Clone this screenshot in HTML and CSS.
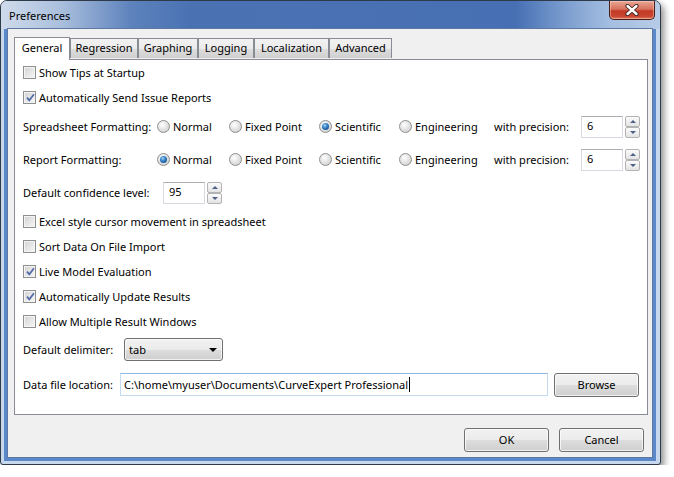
FILE: index.html
```html
<!DOCTYPE html>
<html lang="en">
<head>
    <meta charset="UTF-8">
    <title>Preferences</title>
    <link rel="stylesheet" href="styles.css">
</head>
<body>

    <div class="window">
        <!-- Barra de titulo -->
        <div class="titlebar">
            <span class="title">Preferences</span>
            <div class="close-btn">
                <svg width="16" height="12" viewBox="0 0 16 12">
                    <path d="M3.5 2 L12.5 10 M12.5 2 L3.5 10" stroke="#3b2420" stroke-width="4.2" stroke-linecap="round"/>
                    <path d="M3.5 2 L12.5 10 M12.5 2 L3.5 10" stroke="#ffffff" stroke-width="2.4" stroke-linecap="round"/>
                </svg>
            </div>
        </div>

        <div class="client">
            <!-- Abas -->
            <div class="tabs">
                <div class="tab active w-general">General</div>
                <div class="tab w-regression">Regression</div>
                <div class="tab w-graphing">Graphing</div>
                <div class="tab w-logging">Logging</div>
                <div class="tab w-localization">Localization</div>
                <div class="tab w-advanced">Advanced</div>
            </div>

            <div class="panel">
                <div class="check-row">
                    <span class="check"></span>
                    <span>Show Tips at Startup</span>
                </div>
                <div class="check-row">
                    <span class="check checked"></span>
                    <span>Automatically Send Issue Reports</span>
                </div>

                <!-- Formatacao -->
                <div class="format-row first">
                    <span>Spreadsheet Formatting:</span>
                    <span class="radio-opt"><span class="radio"></span>Normal</span>
                    <span class="radio-opt"><span class="radio"></span>Fixed Point</span>
                    <span class="radio-opt"><span class="radio selected"></span>Scientific</span>
                    <span class="radio-opt"><span class="radio"></span>Engineering</span>
                    <span>with precision:</span>
                    <div class="spinner">
                        <div class="textbox small">6</div>
                        <div class="spin-btns">
                            <span class="spin-btn"><span class="arrow-up"></span></span>
                            <span class="spin-btn"><span class="arrow-down"></span></span>
                        </div>
                    </div>
                </div>
                <div class="format-row second">
                    <span>Report Formatting:</span>
                    <span class="radio-opt"><span class="radio selected"></span>Normal</span>
                    <span class="radio-opt"><span class="radio"></span>Fixed Point</span>
                    <span class="radio-opt"><span class="radio"></span>Scientific</span>
                    <span class="radio-opt"><span class="radio"></span>Engineering</span>
                    <span>with precision:</span>
                    <div class="spinner">
                        <div class="textbox small">6</div>
                        <div class="spin-btns">
                            <span class="spin-btn"><span class="arrow-up"></span></span>
                            <span class="spin-btn"><span class="arrow-down"></span></span>
                        </div>
                    </div>
                </div>

                <div class="field-row confidence">
                    <span class="lbl-confidence">Default confidence level:</span>
                    <div class="spinner">
                        <div class="textbox small">95</div>
                        <div class="spin-btns">
                            <span class="spin-btn"><span class="arrow-up"></span></span>
                            <span class="spin-btn"><span class="arrow-down"></span></span>
                        </div>
                    </div>
                </div>

                <div class="check-row">
                    <span class="check"></span>
                    <span>Excel style cursor movement in spreadsheet</span>
                </div>
                <div class="check-row">
                    <span class="check"></span>
                    <span>Sort Data On File Import</span>
                </div>
                <div class="check-row">
                    <span class="check checked"></span>
                    <span>Live Model Evaluation</span>
                </div>
                <div class="check-row">
                    <span class="check checked"></span>
                    <span>Automatically Update Results</span>
                </div>
                <div class="check-row">
                    <span class="check"></span>
                    <span>Allow Multiple Result Windows</span>
                </div>

                <div class="field-row delimiter">
                    <span class="lbl-delimiter">Default delimiter:</span>
                    <div class="combo">
                        <span>tab</span>
                        <span class="combo-arrow"></span>
                    </div>
                </div>

                <div class="field-row data-file">
                    <span class="lbl-data">Data file location:</span>
                    <div class="textbox path focused">C:\home\myuser\Documents\CurveExpert Professional<span class="caret"></span></div>
                    <div class="button">Browse</div>
                </div>
            </div>

            <!-- Botoes -->
            <div class="dialog-buttons">
                <div class="button">OK</div>
                <div class="button">Cancel</div>
            </div>
        </div>
    </div>

</body>
</html>
```

FILE: styles.css
```css
body {
    margin: 0;
    background-color: #ffffff;
    font-family: "Noto Sans", "Open Sans", sans-serif;
    font-size: 11px;
    color: #000000;
}

/* Janela */
.window {
    width: 659px;
    height: 463px;
    border: 1px solid #2f3a48;
    border-radius: 7px 7px 3px 3px;
    background-color: #c7d8ed;
    box-shadow: 3px 4px 7px rgba(0, 0, 0, 0.45);
    display: flex;
    flex-direction: column;
    overflow: hidden;
}

.titlebar {
    height: 28px;
    display: flex;
    justify-content: space-between;
    align-items: flex-start;
    padding: 0 5px 0 8px;
    background: linear-gradient(to right, #cfdbeb 0px, #aabfdd 60px, #5d82bc 130px, #4a72b3 190px, #4770b4 515px, #7c9ecf 565px, #a5bfe1 610px, #b6cbe6 659px);
    flex-shrink: 0;
}

.title {
    line-height: 28px;
    margin-top: 1px;
}

.close-btn {
    width: 44px;
    height: 18px;
    border: 1px solid #4b1c14;
    border-top: none;
    border-radius: 0 0 5px 5px;
    background: linear-gradient(#e9a796 0%, #d8715d 45%, #c23b27 55%, #c8452f 85%, #e07a60 100%);
    box-shadow: inset 0 0 0 1px rgba(255, 220, 210, 0.45);
    display: flex;
    align-items: center;
    justify-content: center;
}

.client {
    flex: 1;
    margin: 0 8px 7px 7px;
    padding: 8px 4px 5px 6px;
    background-color: #f0f0f0;
    box-shadow: 0 0 0 1px #5d79a3, -4px 0 0 0 #5a88c8, 4px 0 0 0 #5a88c8, 0 4px 0 0 #5a88c8, -4px 4px 0 0 #5a88c8, 4px 4px 0 0 #5a88c8;
    display: flex;
    flex-direction: column;
}

/* Abas */
.tabs {
    display: flex;
    height: 22px;
    align-items: flex-end;
    position: relative;
    z-index: 1;
}

.tab {
    height: 20px;
    box-sizing: border-box;
    border: 1px solid #898c95;
    border-bottom: none;
    background: linear-gradient(#f2f2f2 0%, #ebebeb 50%, #dddddd 51%, #cfcfcf 100%);
    text-align: center;
    line-height: 18px;
    margin-bottom: 1px;
}

.tab.active {
    height: 23px;
    background: #ffffff;
    margin-bottom: -1px;
    line-height: 20px;
}

.w-general { width: 56px; }
.w-regression { width: 68px; }
.w-graphing { width: 60px; }
.w-logging { width: 56px; }
.w-localization { width: 75px; }
.w-advanced { width: 63px; }

.panel {
    height: 354px;
    border: 1px solid #898c95;
    background-color: #ffffff;
    padding: 0 8px;
}

/* Caixas de selecao */
.check-row {
    height: 25px;
    display: flex;
    align-items: center;
    gap: 3px;
}

.check {
    width: 11px;
    height: 11px;
    border: 1px solid #8e8f8f;
    background: linear-gradient(135deg, #d2d2d2, #f8f8f8);
    box-shadow: inset 0 0 0 1px #f4f4f4;
    position: relative;
}

.check.checked::after {
    content: "";
    position: absolute;
    left: 2px;
    top: 1px;
    width: 9px;
    height: 9px;
    background: url("data:image/svg+xml,%3Csvg xmlns='http://www.w3.org/2000/svg' width='9' height='9' viewBox='0 0 9 9'%3E%3Cpath d='M1 4.6 L3.3 7.3 L8 1.2' fill='none' stroke='%23506aa8' stroke-width='1.7'/%3E%3C/svg%3E") no-repeat;
}

/* Formatacao */
.format-row {
    display: grid;
    grid-template-columns: 134px 72px 90px 80px 95px 87px auto;
    align-items: center;
}

.format-row.first { height: 33px; }
.format-row.second { height: 33px; }

.radio-opt {
    display: flex;
    align-items: center;
    gap: 3px;
}

.radio {
    width: 11px;
    height: 11px;
    border: 1px solid #8e8f8f;
    border-radius: 50%;
    background: radial-gradient(circle at 40% 35%, #ffffff, #d4d4d4 75%);
    display: flex;
    align-items: center;
    justify-content: center;
}

.radio.selected::after {
    content: "";
    width: 7px;
    height: 7px;
    border-radius: 50%;
    background: radial-gradient(circle at 40% 35%, #9fd4f8 0%, #2f79c0 45%, #0f3d75 100%);
}

/* Campos numericos */
.spinner {
    display: flex;
    gap: 2px;
}

.textbox {
    box-sizing: border-box;
    height: 22px;
    border: 1px solid #d5dae1;
    border-top-color: #abadb3;
    background-color: #ffffff;
    line-height: 18px;
    padding-left: 5px;
}

.textbox.small {
    width: 42px;
}

.spin-btns {
    display: flex;
    flex-direction: column;
}

.spin-btn {
    box-sizing: border-box;
    width: 15px;
    height: 11px;
    border: 1px solid #b3b3b3;
    border-radius: 2px;
    background: linear-gradient(#fbfbfb, #e3e3e3);
    display: flex;
    align-items: center;
    justify-content: center;
}

.arrow-up {
    border-left: 3px solid transparent;
    border-right: 3px solid transparent;
    border-bottom: 3px solid #4d6185;
}

.arrow-down {
    border-left: 3px solid transparent;
    border-right: 3px solid transparent;
    border-top: 3px solid #4d6185;
}

.field-row {
    display: flex;
    align-items: center;
}

.field-row.confidence { height: 33px; }
.field-row.delimiter { height: 31px; }
.field-row.data-file { height: 39px; }

.lbl-confidence { width: 140px; }
.lbl-delimiter { width: 101px; }
.lbl-data { width: 97px; }

/* Lista suspensa */
.combo {
    box-sizing: border-box;
    width: 99px;
    height: 23px;
    border: 1px solid #707070;
    border-radius: 3px;
    background: linear-gradient(#f2f2f2 0%, #ebebeb 50%, #dddddd 51%, #cfcfcf 100%);
    box-shadow: inset 0 0 0 1px rgba(255, 255, 255, 0.7);
    display: flex;
    align-items: center;
    justify-content: space-between;
    padding: 0 3px 0 4px;
}

.combo-arrow {
    width: 0;
    height: 0;
    border-left: 4px solid transparent;
    border-right: 4px solid transparent;
    border-top: 4px solid #000000;
    margin-right: 2px;
}

.textbox.path {
    flex: 1;
    height: 23px;
    padding-left: 3px;
    line-height: 19px;
    display: flex;
    align-items: center;
}

.textbox.focused {
    border-color: #c5dcf0;
    border-top-color: #8fb9e0;
}

.caret {
    display: inline-block;
    width: 1px;
    height: 15px;
    background-color: #000000;
    margin-left: 1px;
}

/* Botoes */
.button {
    box-sizing: border-box;
    width: 85px;
    height: 24px;
    border: 1px solid #707070;
    border-radius: 3px;
    background: linear-gradient(#f2f2f2 0%, #ebebeb 50%, #dddddd 51%, #cfcfcf 100%);
    box-shadow: inset 0 0 0 1px rgba(255, 255, 255, 0.7);
    text-align: center;
    line-height: 22px;
}

.data-file .button {
    margin-left: 6px;
}

.dialog-buttons {
    display: flex;
    justify-content: flex-end;
    gap: 10px;
    margin-top: 13px;
    padding-right: 4px;
}
```
